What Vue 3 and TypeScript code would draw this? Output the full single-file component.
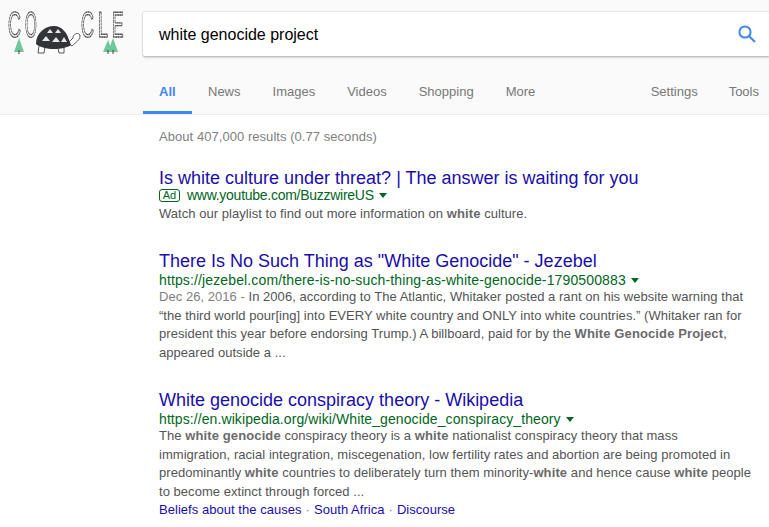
<script setup lang="ts">
type Part = { text: string; bold?: boolean }

const tabs = ['News', 'Images', 'Videos', 'Shopping', 'More']
const tools = ['Settings', 'Tools']

const logoLetters = [
  { char: 'C', x: 8, scale: 0.5 },
  { char: 'O', x: 25, scale: 0.42 },
  { char: 'C', x: 81, scale: 0.5 },
  { char: 'L', x: 98, scale: 0.5 },
  { char: 'E', x: 112, scale: 0.48 },
]

const jezebelLines: Part[][] = [
  [{ text: 'In 2006, according to The Atlantic, Whitaker posted a rant on his website warning that' }],
  [{ text: '“the third world pour[ing] into EVERY white country and ONLY into white countries.” (Whitaker ran for' }],
  [{ text: 'president this year before endorsing Trump.) A billboard, paid for by the ' }, { text: 'White Genocide Project', bold: true }, { text: ',' }],
  [{ text: 'appeared outside a ...' }],
]

const wikiLines: Part[][] = [
  [{ text: 'The ' }, { text: 'white genocide', bold: true }, { text: ' conspiracy theory is a ' }, { text: 'white', bold: true }, { text: ' nationalist conspiracy theory that mass' }],
  [{ text: 'immigration, racial integration, miscegenation, low fertility rates and abortion are being promoted in' }],
  [{ text: 'predominantly ' }, { text: 'white', bold: true }, { text: ' countries to deliberately turn them minority-' }, { text: 'white', bold: true }, { text: ' and hence cause ' }, { text: 'white', bold: true }, { text: ' people' }],
  [{ text: 'to become extinct through forced ...' }],
]

const sitelinks = ['Beliefs about the causes', 'South Africa', 'Discourse']
</script>

<template>
  <div class="page">
    <header class="header">
      <div class="top-row">
        <svg class="logo" width="143" height="56" viewBox="0 0 143 56" role="img" aria-label="Google doodle">
          <g class="tree">
            <path d="M19 38 L14 52 H24 Z" />
            <path d="M108 40 L103 52 H113 Z" />
            <path d="M113 38 L108 52 H118 Z" />
          </g>
          <path d="M19 50 V54 M108 50 V54 M113 50 V54" class="trunk" />
          <g class="logo-letters">
            <text
              v-for="(letter, i) in logoLetters"
              :key="i"
              :transform="`translate(${letter.x} 37) scale(${letter.scale} 1)`"
            >{{ letter.char }}</text>
          </g>
          <path d="M39 46 L38 53 H44 L45 47 M58 48 L59 53 H64 L64 46" class="turtle-line" />
          <path d="M68 43 L73 38 C73 33 80 32 80 36 C80 40 76 42 72 46 Z" class="turtle-line" />
          <path d="M36 44 C36 33 45 26 54 26 C62 26 67 33 69 40 L71 45 C64 50 44 51 36 44 Z" class="shell" />
          <path d="M47 33 l3 -4 l3 4 Z M55 33 l3 -4 l3 4 Z M42 41 l4 -5 l4 5 Z M52 42 l4 -5 l4 5 Z M61 42 l3 -5 l3 5 Z" class="shell-mark" />
        </svg>
        <div class="search-box">
          <span class="query">white genocide project</span>
          <svg class="search-icon" width="20" height="20" viewBox="0 0 20 20" aria-hidden="true">
            <circle cx="8" cy="8" r="5.6" />
            <path d="M12.2 12.2 L18 18" />
          </svg>
        </div>
      </div>
      <nav class="tabs">
        <a class="tab tab-active">All</a>
        <a v-for="tab in tabs" :key="tab" class="tab">{{ tab }}</a>
        <div class="tools">
          <a v-for="tool in tools" :key="tool" class="tab">{{ tool }}</a>
        </div>
      </nav>
    </header>

    <main class="results">
      <div class="stats">About 407,000 results (0.77 seconds)</div>

      <section class="result result-ad">
        <a class="title">Is white culture under threat? | The answer is waiting for you</a>
        <div class="url-row url-row-ad">
          <span class="ad-badge">Ad</span>
          <span class="url">www.youtube.com/BuzzwireUS</span>
          <span class="caret"></span>
        </div>
        <div class="line">Watch our playlist to find out more information on <b>white</b> culture.</div>
      </section>

      <section class="result result-jezebel">
        <a class="title">There Is No Such Thing as "White Genocide" - Jezebel</a>
        <div class="url-row">
          <span class="url">https://jezebel.com/there-is-no-such-thing-as-white-genocide-1790500883</span>
          <span class="caret"></span>
        </div>
        <div v-for="(parts, i) in jezebelLines" :key="i" class="line">
          <span v-if="i === 0" class="date">Dec 26, 2016 - </span>
          <template v-for="(part, j) in parts" :key="j">
            <b v-if="part.bold">{{ part.text }}</b>
            <template v-else>{{ part.text }}</template>
          </template>
        </div>
      </section>

      <section class="result result-wiki">
        <a class="title">White genocide conspiracy theory - Wikipedia</a>
        <div class="url-row url-row-wiki">
          <span class="url">https://en.wikipedia.org/wiki/White_genocide_conspiracy_theory</span>
          <span class="caret"></span>
        </div>
        <div v-for="(parts, i) in wikiLines" :key="i" class="line">
          <template v-for="(part, j) in parts" :key="j">
            <b v-if="part.bold">{{ part.text }}</b>
            <template v-else>{{ part.text }}</template>
          </template>
        </div>
        <div class="sitelinks">
          <template v-for="(link, i) in sitelinks" :key="link">
            <span v-if="i > 0" class="dot">·</span>
            <a class="sitelink">{{ link }}</a>
          </template>
        </div>
      </section>
    </main>
  </div>
</template>

<style scoped>
.page {
  width: 769px;
  height: 527px;
  overflow: hidden;
  background: #fff;
  font-family: "Liberation Sans", Arial, sans-serif;
  color: #545454;
}

.header {
  height: 114px;
  background: #fafafa;
  border-bottom: 1px solid #ebebeb;
}

.top-row {
  display: flex;
  padding-top: 12px;
  height: 44px;
}

.logo {
  flex: none;
  margin-top: -12px;
}

.logo-letters {
  filter: grayscale(1);
}

.logo-letters text {
  font-size: 36px;
  font-family: "Liberation Sans", Arial, sans-serif;
  fill: #fafafa;
  stroke: #4a4a4a;
  stroke-width: 1.4;
  stroke-dasharray: 3 0.5;
  vector-effect: non-scaling-stroke;
  text-rendering: geometricPrecision;
}

.tree {
  fill: #6fc79b;
}

.trunk {
  stroke: #444;
  stroke-width: 1;
  fill: none;
}

.shell {
  fill: #33343a;
}

.shell-mark {
  fill: #e8e8e8;
}

.turtle-line {
  fill: #fff;
  stroke: #555;
  stroke-width: 1;
}

.search-box {
  flex: 1;
  display: flex;
  align-items: center;
  justify-content: space-between;
  height: 44px;
  padding: 0 13px 0 16px;
  background: #fff;
  border-radius: 2px 0 0 2px;
  box-shadow: 0 2px 2px 0 rgba(0, 0, 0, 0.16), 0 0 0 1px rgba(0, 0, 0, 0.08);
}

.query {
  font-size: 16px;
  color: #000;
  padding-top: 2px;
}

.search-icon {
  flex: none;
  margin-right: -1px;
}

.search-icon circle,
.search-icon path {
  fill: none;
  stroke: #4285f4;
  stroke-width: 2;
}

.tabs {
  display: flex;
  height: 58px;
  padding-left: 143px;
  font-size: 13px;
}

.tab {
  display: block;
  padding: 28px 16px 0;
  color: #777;
  white-space: nowrap;
}

.tab-active {
  width: 49px;
  box-sizing: border-box;
  height: 58px;
  color: #4285f4;
  font-weight: bold;
  border-bottom: 3px solid #4285f4;
}

.tools {
  display: flex;
  margin-left: auto;
  padding-right: 10px;
}

.tools .tab {
  padding: 28px 0 0 31px;
}

.results {
  padding: 14px 0 0 159px;
}

.stats {
  font-size: 13px;
  line-height: 15px;
  color: #808080;
  letter-spacing: 0.05px;
}

.result {
  white-space: nowrap;
}

.result-ad {
  margin-top: 23px;
}

.result-jezebel {
  margin-top: 26.5px;
}

.result-wiki {
  margin-top: 27px;
}

.title {
  display: block;
  font-size: 18px;
  line-height: 22px;
  color: #1a0dab;
}

.url-row {
  display: flex;
  align-items: center;
  height: 16px;
  font-size: 14px;
  color: #006621;
  letter-spacing: 0.13px;
}

.url-row-ad {
  height: 14px;
  margin: -1px 0 3px;
  letter-spacing: -0.27px;
}

.url-row-wiki {
  letter-spacing: 0.09px;
}

.ad-badge {
  box-sizing: border-box;
  width: 21px;
  height: 13px;
  margin-right: 7px;
  border: 1px solid #006621;
  border-radius: 3px;
  font-size: 11px;
  line-height: 11px;
  text-align: center;
  letter-spacing: 0;
}

.caret {
  width: 0;
  height: 0;
  margin-left: 5px;
  margin-top: 1px;
  border-top: 5px solid #006621;
  border-left: 4px solid transparent;
  border-right: 4px solid transparent;
}

.line {
  font-size: 13px;
  line-height: 18.5px;
  color: #545454;
  letter-spacing: 0.04px;
}

.line b {
  color: #6a6a6a;
  letter-spacing: 0.12px;
}

.date {
  color: #808080;
}

.sitelinks {
  font-size: 13px;
  line-height: 18.5px;
  color: #808080;
  letter-spacing: 0.04px;
}

.dot {
  margin: 0 4px;
}

.sitelink {
  color: #1a0dab;
}
</style>

<style>
html,
body {
  margin: 0;
  background: #fff;
}
</style>
